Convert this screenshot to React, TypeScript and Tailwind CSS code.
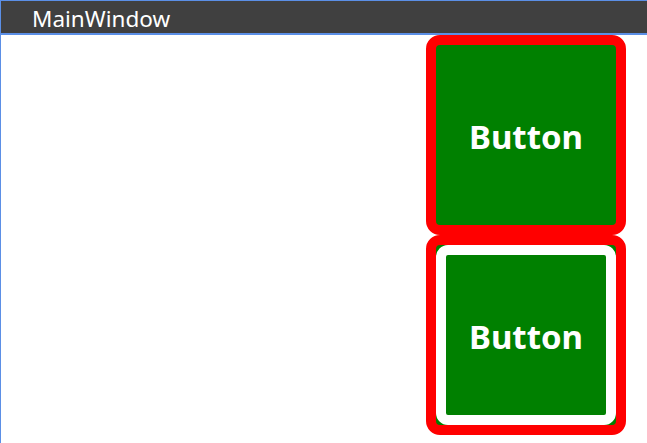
import React from "react";

export default function App() {
  return (
    <div className="w-[647px] h-[443px] bg-white overflow-hidden flex flex-col border-l border-[#5b8fe6]" style={{ fontFamily: '"Noto Sans", "Open Sans", sans-serif' }}>
      <div className="h-[35px] shrink-0 bg-[#404040] border-t border-b-2 border-[#5b8fe6] flex items-center pl-[31px] pt-[4px]">
        <span className="text-white text-[22.5px] leading-none">MainWindow</span>
      </div>
      <div className="flex-1 flex flex-col items-end pr-[21px]">
        <div className="w-[200px] h-[200px] border-[10px] border-[#ff0000] rounded-[14px] bg-[#008000] flex items-center justify-center">
          <span className="text-white font-bold text-[33px] leading-none mt-[2px]">Button</span>
        </div>
        <div className="w-[200px] h-[200px] border-[10px] border-[#ff0000] rounded-[14px] bg-[#008000] flex">
          <div className="flex-1 border-[10px] border-white rounded-[12px] bg-[#008000] flex items-center justify-center">
            <span className="text-white font-bold text-[33px] leading-none mt-[2px]">Button</span>
          </div>
        </div>
      </div>
    </div>
  );
}
